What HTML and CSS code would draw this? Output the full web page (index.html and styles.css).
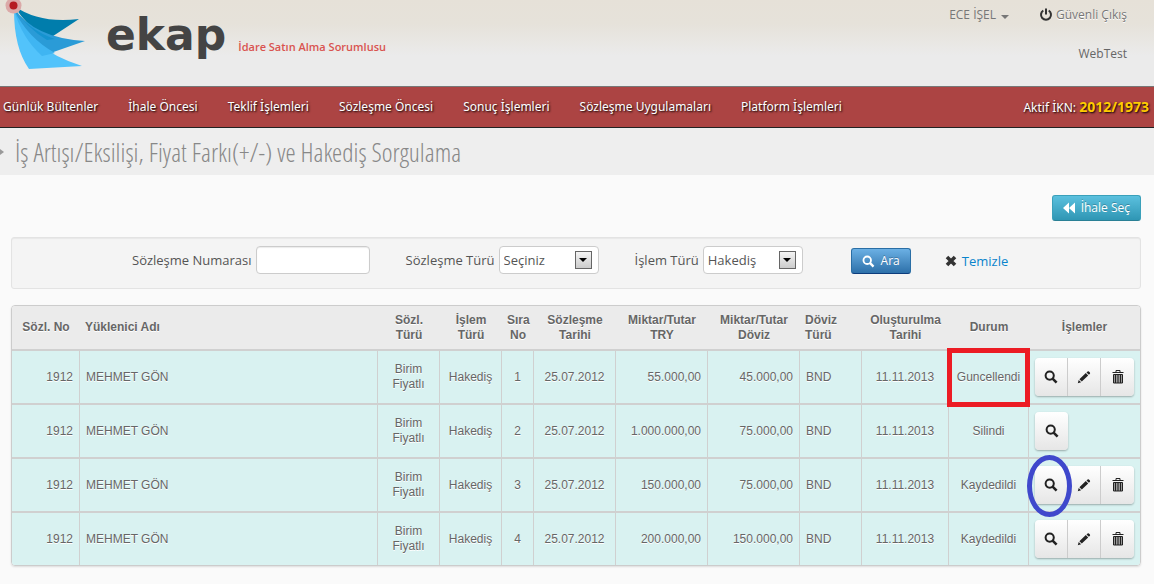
FILE: index.html
```html
<!DOCTYPE html>
<html lang="tr">
<head>
<meta charset="utf-8">
<title>ekap</title>
<link rel="stylesheet" href="styles.css">
</head>
<body>
<svg class="sprite" aria-hidden="true">
  <symbol id="search" viewBox="0 0 14 14"><circle cx="5.7" cy="5.6" r="4.1" fill="none" stroke="currentColor" stroke-width="2"/><path d="M8.6 8.6l4 4" stroke="currentColor" stroke-width="2.6"/></symbol>
  <symbol id="pencil" viewBox="0 0 14 14"><path d="M.8 13.2l.9-3.2 2.4 2.3zM2.4 9.2l6.4-6.1 2.4 2.4-6.4 6.1zM9.5 2.4l1.1-1q.7-.5 1.3 0l1 1q.5.7 0 1.300l-1 1.100z" fill="currentColor"/></symbol>
  <symbol id="trash" viewBox="0 0 14 14"><path d="M1.500 2.500h11M5 2.500v-2h4v2" fill="none" stroke="currentColor"/><path d="M2.500 4.500h9v8.500h-9z" fill="#999" stroke="currentColor"/><path d="M4.500 5v8M7 5v8M9.500 5v8" stroke="currentColor"/></symbol>
</svg>

<header class="header">
  <a class="brand" href="#" aria-label="ekap">
    <svg class="logo" width="86" height="70" viewBox="0 0 86 70" aria-hidden="true">
      <path d="M14 6Q40 24 79 19L47 40Q27 26 14 6z" fill="#007dac"/>
      <path d="M14 8Q34 38 85 41L42 56Q20 35 14 8z" fill="#2a9bd7"/>
      <path d="M14 8Q28 30 55 39L47 40Q27 28 14 8z" fill="#1593cf"/>
      <path d="M14 10Q28 49 82 66L29 69Q14 48 14 10z" fill="#52c3fb"/>
      <path d="M14 10Q22 38 42 56L55 53Q28 38 14 10z" fill="#3fb5f2"/>
      <circle cx="13.500" cy="5.500" r="8" fill="#dba9a8"/>
      <circle cx="13.500" cy="5.500" r="4" fill="#b51b22"/>
    </svg>
    <span class="wordmark">ekap</span>
  </a>
  <span class="role">İdare Satın Alma Sorumlusu</span>
  <div class="account">
    <div class="account-links">
      <button class="user" type="button">ECE İŞEL <span class="caret"></span></button>
      <a class="logout" href="#"><svg width="14" height="14" viewBox="0 0 14 14" aria-hidden="true"><path d="M4.300 2.500a5 5 0 1 0 5.400 0M7 .5v6" fill="none" stroke="#333" stroke-width="2"/></svg>Güvenli Çıkış</a>
    </div>
    <span class="env">WebTest</span>
  </div>
</header>

<nav class="nav">
  <a href="#">Günlük Bültenler</a>
  <a href="#">İhale Öncesi</a>
  <a href="#">Teklif İşlemleri</a>
  <a href="#">Sözleşme Öncesi</a>
  <a href="#">Sonuç İşlemleri</a>
  <a href="#">Sözleşme Uygulamaları</a>
  <a href="#">Platform İşlemleri</a>
  <span class="active-ikn">Aktif İKN: <strong>2012/1973</strong></span>
</nav>

<div class="title-bar">
  <span class="marker"></span>
  <h1>İş Artışı/Eksilişi, Fiyat Farkı(+/-) ve Hakediş Sorgulama</h1>
</div>

<main class="content">
  <button class="btn btn-info" type="button"><svg width="12" height="12" viewBox="0 0 12 12" aria-hidden="true"><path d="M6 .5v11L0 6zM12 .5v11L6 6z" fill="#fff"/></svg>İhale Seç</button>

  <form class="filter">
    <div class="field">
      <label for="number">Sözleşme Numarası</label>
      <input class="text" id="number" type="text">
    </div>
    <div class="field">
      <label for="contract">Sözleşme Türü</label>
      <span class="select"><select id="contract"><option>Seçiniz</option></select><span class="drop"></span></span>
    </div>
    <div class="field">
      <label for="operation">İşlem Türü</label>
      <span class="select"><select id="operation"><option>Hakediş</option></select><span class="drop"></span></span>
    </div>
    <div class="actions">
      <button class="btn btn-primary" type="button"><svg width="13" height="13" aria-hidden="true"><use href="#search"/></svg>Ara</button>
      <a class="clear" href="#"><svg width="12" height="12" viewBox="0 0 12 12" aria-hidden="true"><path d="M2 2l8 8M10 2l-8 8" stroke="#333" stroke-width="3.600"/></svg>Temizle</a>
    </div>
  </form>

  <table class="grid">
    <colgroup><col class="c-no"><col><col class="c-type"><col class="c-type"><col class="c-seq"><col class="c-date"><col class="c-amount"><col class="c-amount"><col class="c-type"><col class="c-created"><col class="c-status"><col class="c-actions"></colgroup>
    <thead>
      <tr><th>Sözl. No</th><th class="left">Yüklenici Adı</th><th>Sözl. Türü</th><th>İşlem Türü</th><th>Sıra No</th><th>Sözleşme Tarihi</th><th>Miktar/Tutar TRY</th><th>Miktar/Tutar Döviz</th><th class="left">Döviz Türü</th><th>Oluşturulma Tarihi</th><th>Durum</th><th>İşlemler</th></tr>
    </thead>
    <tbody>
      <tr><td class="right">1912</td><td class="left">MEHMET GÖN</td><td>Birim Fiyatlı</td><td>Hakediş</td><td>1</td><td>25.07.2012</td><td class="right">55.000,00</td><td class="right">45.000,00</td><td class="left">BND</td><td>11.11.2013</td><td class="marked">Guncellendi<span class="mark-box"></span></td>
        <td class="left"><div class="group"><button type="button" aria-label="Görüntüle"><svg><use href="#search"/></svg></button><button type="button" aria-label="Düzenle"><svg><use href="#pencil"/></svg></button><button type="button" aria-label="Sil"><svg><use href="#trash"/></svg></button></div></td></tr>
      <tr><td class="right">1912</td><td class="left">MEHMET GÖN</td><td>Birim Fiyatlı</td><td>Hakediş</td><td>2</td><td>25.07.2012</td><td class="right">1.000.000,00</td><td class="right">75.000,00</td><td class="left">BND</td><td>11.11.2013</td><td>Silindi</td>
        <td class="left"><div class="group"><button type="button" aria-label="Görüntüle"><svg><use href="#search"/></svg></button></div></td></tr>
      <tr><td class="right">1912</td><td class="left">MEHMET GÖN</td><td>Birim Fiyatlı</td><td>Hakediş</td><td>3</td><td>25.07.2012</td><td class="right">150.000,00</td><td class="right">75.000,00</td><td class="left">BND</td><td>11.11.2013</td><td>Kaydedildi</td>
        <td class="left"><div class="group"><button type="button" aria-label="Görüntüle"><svg><use href="#search"/></svg></button><button type="button" aria-label="Düzenle"><svg><use href="#pencil"/></svg></button><button type="button" aria-label="Sil"><svg><use href="#trash"/></svg></button><span class="mark-ring"></span></div></td></tr>
      <tr><td class="right">1912</td><td class="left">MEHMET GÖN</td><td>Birim Fiyatlı</td><td>Hakediş</td><td>4</td><td>25.07.2012</td><td class="right">200.000,00</td><td class="right">150.000,00</td><td class="left">BND</td><td>11.11.2013</td><td>Kaydedildi</td>
        <td class="left"><div class="group"><button type="button" aria-label="Görüntüle"><svg><use href="#search"/></svg></button><button type="button" aria-label="Düzenle"><svg><use href="#pencil"/></svg></button><button type="button" aria-label="Sil"><svg><use href="#trash"/></svg></button></div></td></tr>
    </tbody>
  </table>
</main>
</body>
</html>
```

FILE: styles.css
```css
* { box-sizing: border-box; }

body {
  margin: 0;
  background: #fafafa;
  color: #555;
  font: 13px/18px "Open Sans", "Noto Sans", sans-serif;
}

a { color: inherit; text-decoration: none; }
button, input, select { font: inherit; color: inherit; }
.sprite { position: absolute; width: 0; height: 0; }

.header {
  display: flex;
  align-items: flex-start;
  height: 86px;
  padding-right: 27px;
  background: linear-gradient(#e6e1d8, #e6e2da 24px, #ebebeb 56px);
}
.brand { display: flex; color: #444; }
.logo { display: block; }
.wordmark {
  margin-left: 20px;
  padding-top: 8px;
  font: bold 44px/54px "DejaVu Sans", sans-serif;
}
.role {
  margin: 38px 0 0 12px;
  color: #d9534f;
  font-size: 11px;
  font-weight: 600;
}
.account {
  display: flex;
  flex-direction: column;
  align-items: flex-end;
  gap: 21px;
  margin-left: auto;
  padding-top: 6px;
  font-size: 12px;
}
.account-links { display: flex; gap: 30px; color: #777; text-shadow: 0 1px 0 #fff; }
.user {
  display: flex;
  align-items: center;
  gap: 5px;
  padding: 0;
  border: 0;
  background: none;
}
.caret { margin-top: 4px; border: 4px solid transparent; border-top-color: #777; border-bottom: 0; }
.logout { display: flex; align-items: center; gap: 3px; }
.env { color: #666; }

.nav {
  display: flex;
  align-items: center;
  gap: 30px;
  height: 42px;
  padding: 0 5px 0 3px;
  border-top: 1px solid #777;
  border-bottom: 1px solid #222;
  background: #ac4443;
  color: #fff;
  font-family: "Noto Sans", sans-serif;
  font-size: 12px;
  text-shadow: 1px 1px 2px #000;
  white-space: nowrap;
}
.active-ikn { margin-left: auto; }
.active-ikn strong { color: #fc0; font-size: 14px; }

.title-bar {
  display: flex;
  align-items: center;
  gap: 11px;
  height: 47px;
  background: #eee;
}
.marker { border: 3px solid transparent; border-left: 4px solid #999; border-right: 0; }
h1 {
  margin: 0;
  color: #888;
  font: 300 26px/30px "Open Sans Condensed Light", "Open Sans Condensed", "Liberation Sans Narrow", sans-serif;
}

.content { display: flex; flex-direction: column; padding: 20px 13px 18px 11px; }

.btn {
  display: flex;
  align-items: center;
  justify-content: center;
  gap: 6px;
  height: 26px;
  padding: 0 10px;
  border: 1px solid;
  border-radius: 3px;
  color: #fff;
  font-size: 12px;
  text-shadow: 0 -1px 0 rgba(0, 0, 0, .25);
}
.btn-info {
  align-self: flex-end;
  border-color: #3aa0ba #3aa0ba #2a8095;
  background: linear-gradient(#5bc0de, #2f96b4);
}
.btn-primary {
  width: 60px;
  border-color: #2a6ea5 #2a6ea5 #0c3c7c;
  background: linear-gradient(#6bb0e4, #2d70a9);
}

.filter {
  display: flex;
  align-items: flex-start;
  gap: 36px;
  min-height: 52px;
  margin: 16px 0;
  padding: 8px 10px 8px 120px;
  border: 1px solid #e3e3e3;
  border-radius: 3px;
  background: #f4f4f4;
  box-shadow: inset 0 1px 1px rgba(0, 0, 0, .05);
}
.field { display: flex; align-items: center; gap: 4px; white-space: nowrap; }
.text, .select select {
  height: 28px;
  border: 1px solid #ccc;
  border-radius: 4px;
  background: #fff;
}
.text { width: 114px; box-shadow: inset 0 1px 1px rgba(0, 0, 0, .08); }
.select { position: relative; display: flex; }
.select select { width: 100px; padding: 0 24px 0 4px; appearance: none; }
.drop {
  position: absolute;
  top: 5px;
  right: 7px;
  display: flex;
  align-items: center;
  justify-content: center;
  width: 17px;
  height: 18px;
  border: 1px solid #666;
  background: linear-gradient(#f4f4f4, #ccc);
  pointer-events: none;
}
.drop::after { content: ""; border: 4px solid transparent; border-top-color: #000; border-bottom: 0; }
.actions { display: flex; gap: 34px; margin: 2px 0 0 12px; }
.clear { display: flex; align-items: center; gap: 5px; color: #0a84cc; }

.grid {
  width: 100%;
  table-layout: fixed;
  border: 1px solid #ccc;
  border-collapse: separate;
  border-spacing: 0;
  border-radius: 4px;
  box-shadow: 0 1px 2px rgba(0, 0, 0, .12);
  color: #666;
  font: 12px/15px "Liberation Sans", Arial, sans-serif;
  text-shadow: 0 1px 0 #fff;
}
.c-no { width: 68px; }
.c-type { width: 62px; }
.c-seq { width: 32px; }
.c-date { width: 82px; }
.c-amount { width: 92px; }
.c-created { width: 87px; }
.c-status { width: 80px; }
.c-actions { width: 111px; }

th {
  height: 45px;
  padding: 0 5px;
  border-bottom: 2px solid #d0d0d0;
  background: #ebebeb;
}
td {
  height: 54px;
  padding: 0 6px;
  border-right: 1px solid #d0d0d0;
  border-bottom: 2px solid #d0d0d0;
  background: #d9f2f1;
  text-align: center;
}
td:last-child { border-right: 0; }
tr:last-child td { height: 52px; border-bottom: 0; }
.left { text-align: left; }
.right { text-align: right; }
th:first-child { border-top-left-radius: 3px; }
th:last-child { border-top-right-radius: 3px; }
tr:last-child td:first-child { border-bottom-left-radius: 3px; }
tr:last-child td:last-child { border-bottom-right-radius: 3px; }

.group { position: relative; display: inline-flex; vertical-align: middle; border-radius: 4px; box-shadow: 0 1px 2px rgba(0, 0, 0, .3); }
.group button {
  display: flex;
  align-items: center;
  justify-content: center;
  width: 33px;
  height: 38px;
  padding: 0;
  border: 0;
  border-right: 1px solid #ccc;
  background: linear-gradient(#fff, #e6e6e6);
  color: #222;
}
.group button:first-child { border-radius: 4px 0 0 4px; }
.group button:last-of-type { border-right: 0; border-radius: 0 4px 4px 0; }
.group button:only-child { border-radius: 4px; }
.group svg { width: 14px; height: 14px; }

.marked { position: relative; padding: 0; }
.mark-box { position: absolute; inset: -3px -2px -4px; border: 5px solid #ec1c24; }
.mark-ring {
  position: absolute;
  top: -11px;
  left: -8px;
  width: 45px;
  height: 62px;
  border: 5px solid #3f48cc;
  border-radius: 50%;
}
```
